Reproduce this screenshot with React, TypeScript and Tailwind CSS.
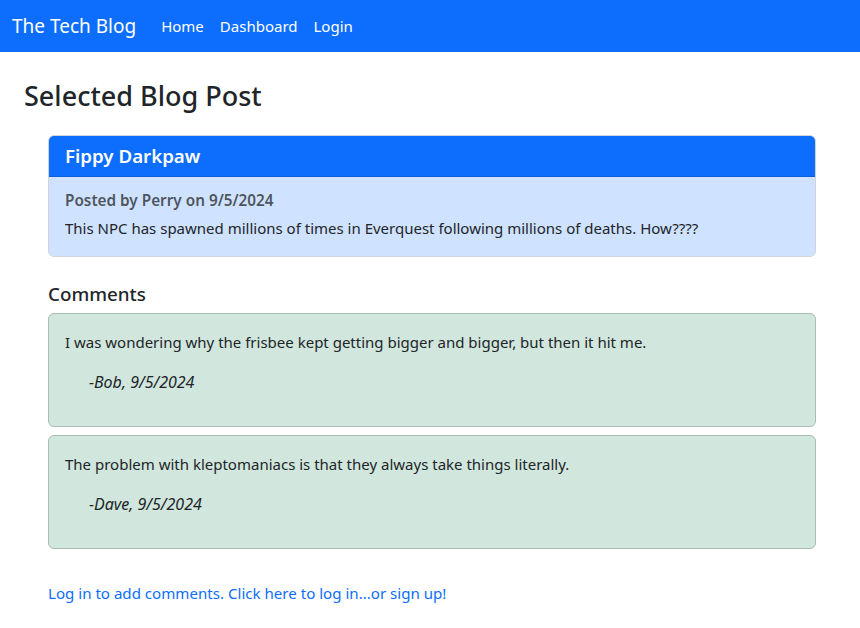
export default function App() {
  const comments = [
    {
      text: "I was wondering why the frisbee kept getting bigger and bigger, but then it hit me.",
      author: "-Bob, 9/5/2024",
    },
    {
      text: "The problem with kleptomaniacs is that they always take things literally.",
      author: "-Dave, 9/5/2024",
    },
  ];

  return (
    <div className="min-h-screen bg-white text-[#212529] font-['Noto_Sans',sans-serif]">
      {/* Navbar */}
      <nav className="flex h-[52px] items-center bg-[#0d6efd] px-3 text-white">
        <span className="mr-[17px] text-[19px]">The Tech Blog</span>
        <a className="px-2 text-[15px]">Home</a>
        <a className="px-2 text-[15px]">Dashboard</a>
        <a className="px-2 text-[15px]">Login</a>
      </nav>

      <main className="px-6 pt-[26px]">
        <h2 className="mb-[22px] text-[27px] font-medium leading-[35px]">Selected Blog Post</h2>

        <div className="pl-6 pr-5">
          {/* Post card */}
          <div className="overflow-hidden rounded-[6px] border border-[#cfd4da] bg-[#cfe2ff]">
            <div className="flex h-[41px] items-center border-b border-[#0b5ed7] bg-[#0d6efd] px-4 text-[18.7px] font-semibold text-white">
              Fippy Darkpaw
            </div>
            <div className="px-4 pb-[16px] pt-[11px] text-[15px] leading-6">
              <p className="mb-1 text-[15.3px] font-semibold text-[#212529]/75">Posted by Perry on 9/5/2024</p>
              <p>This NPC has spawned millions of times in Everquest following millions of deaths. How????</p>
            </div>
          </div>

          <h4 className="mb-[7px] mt-[25px] text-[18.8px] font-medium leading-6">Comments</h4>

          <div className="flex flex-col gap-2">
            {comments.map((c) => (
              <div key={c.author} className="rounded-[6px] border border-[#a8bdb3] bg-[#d1e7dd] p-4 text-[15px] leading-6">
                <p className="mb-4">{c.text}</p>
                <p className="mb-4 pl-6 text-[16px] italic">{c.author}</p>
              </div>
            ))}
          </div>

          <p className="mt-8 text-[15.1px] leading-6 text-[#0d6efd]">
            Log in to add comments. Click here to log in...or sign up!
          </p>
        </div>
      </main>
    </div>
  );
}
